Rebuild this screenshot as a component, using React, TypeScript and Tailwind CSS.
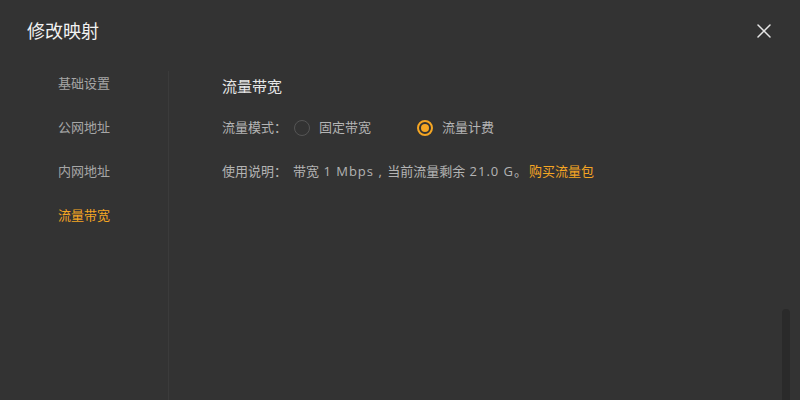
import React from 'react';
import { X } from 'lucide-react';

const navItems = ['基础设置', '公网地址', '内网地址', '流量带宽'];

const Radio: React.FC<{ checked?: boolean; label: string }> = ({ checked, label }) => (
  <label className="flex items-center">
    <span
      className={`w-[16px] h-[16px] rounded-full flex items-center justify-center ${
        checked ? 'border-[2px] border-[#f5a623]' : 'border border-[#555555]'
      }`}
    >
      {checked && <span className="w-[8px] h-[8px] rounded-full bg-[#f5a623]" />}
    </span>
    <span className="ml-[9px] text-[#b4b4b4]">{label}</span>
  </label>
);

const App: React.FC = () => {
  const active = '流量带宽';

  return (
    <div
      className="w-[800px] h-[400px] bg-[#333333] relative overflow-hidden flex flex-col"
      style={{ fontFamily: '"Microsoft YaHei", "Open Sans", "Noto Sans CJK SC", sans-serif' }}
    >
      {/* 标题栏 */}
      <div className="h-[62px] flex items-center justify-between pl-[27px] pr-[24px] shrink-0">
        <span className="text-[18px] text-[#f2f2f2]">修改映射</span>
        <X className="w-[24px] h-[24px] text-[#e6e6e6]" strokeWidth={1.5} />
      </div>

      <div className="flex flex-1">
        {/* 侧边栏 */}
        <div className="w-[168px] flex flex-col">
          {navItems.map(item => (
            <div
              key={item}
              className={`h-[44px] flex items-center justify-center text-[13px] ${
                item === active ? 'text-[#f5a623]' : 'text-[#a6a6a6]'
              }`}
            >
              {item}
            </div>
          ))}
        </div>
        <div className="w-px bg-[#3b3b3b] mt-[9px]" />

        {/* 内容区 */}
        <div className="flex-1 pl-[53px] text-[13px]">
          <div className="h-[44px] pt-[4px] flex items-center text-[15px] text-[#e6e6e6]">流量带宽</div>
          <div className="h-[44px] flex items-center">
            <span className="text-[#b4b4b4]">流量模式：</span>
            <span className="ml-[7px]">
              <Radio label="固定带宽" />
            </span>
            <span className="ml-[46px]">
              <Radio checked label="流量计费" />
            </span>
          </div>
          <div className="h-[44px] flex items-center text-[#b4b4b4] whitespace-pre">
            <span>使用说明：</span>
            <span className="ml-[6px]">带宽</span>
            <span className="tracking-[1px]"> 1 Mbps , </span>
            <span>当前流量剩余</span>
            <span className="tracking-[1px]"> 21.0 G</span>
            <span>。</span>
            <span className="ml-[2px] text-[#f5a623]">购买流量包</span>
          </div>
        </div>
      </div>

      {/* 滚动条 */}
      <div className="absolute right-[10px] top-[309px] bottom-0 w-[8px] rounded-t-full bg-[#2a2a2a]" />
    </div>
  );
};

export default App;
